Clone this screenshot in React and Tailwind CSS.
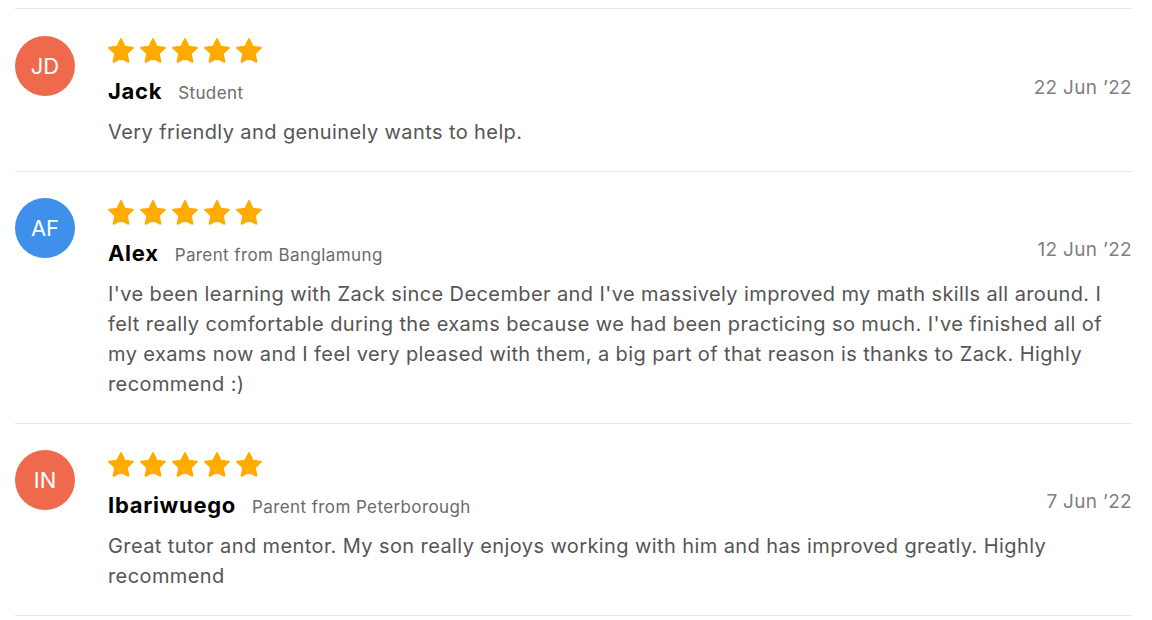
import React from 'react';

const reviews = [
  {
    initials: 'JD',
    color: 'bg-[#ef6a4c]',
    name: 'Jack',
    role: 'Student',
    date: '22 Jun \u201922',
    text: 'Very friendly and genuinely wants to help.',
  },
  {
    initials: 'AF',
    color: 'bg-[#3f90ea]',
    name: 'Alex',
    role: 'Parent from Banglamung',
    date: '12 Jun \u201922',
    text: "I've been learning with Zack since December and I've massively improved my math skills all around. I felt really comfortable during the exams because we had been practicing so much. I've finished all of my exams now and I feel very pleased with them, a big part of that reason is thanks to Zack. Highly recommend :)",
  },
  {
    initials: 'IN',
    color: 'bg-[#ef6a4c]',
    name: 'Ibariwuego',
    role: 'Parent from Peterborough',
    date: '7 Jun \u201922',
    text: 'Great tutor and mentor. My son really enjoys working with him and has improved greatly. Highly recommend',
  },
];

function Star() {
  return (
    <svg width="26" height="25" viewBox="1.6 1.4 20.8 19.8" className="shrink-0">
      <path
        d="M12 2.2l2.9 6.1 6.6.8-4.9 4.6 1.3 6.6L12 17.1l-5.9 3.2 1.3-6.6-4.9-4.6 6.6-.8z"
        fill="#ffab00"
        stroke="#ffab00"
        strokeWidth="1.6"
        strokeLinejoin="round"
      />
    </svg>
  );
}

function Review({ r }) {
  return (
    <div className="flex gap-[33px] border-b border-[#e6e6e6] pt-[26px] first:pt-[27px] pb-[24px]">
      <div className={`w-[60px] h-[60px] rounded-full ${r.color} shrink-0 flex items-center justify-center text-white text-[22px]`}>
        {r.initials}
      </div>
      <div className="flex-1 min-w-0">
        <div className="flex gap-[6px] mt-[2px]">
          {[0, 1, 2, 3, 4].map((i) => <Star key={i} />)}
        </div>
        <div className="flex items-center justify-between mt-[12px]">
          <div className="flex items-baseline gap-4">
            <span className="text-[22px] font-bold text-black tracking-[0.7px]">{r.name}</span>
            <span className="text-[17px] text-[#6b6b6b] tracking-[0.4px]">{r.role}</span>
          </div>
          <span className="text-[19px] text-[#808080] tracking-[0.3px] -mt-[6px]">{r.date}</span>
        </div>
        <p className="mt-[9px] text-[20px] leading-[30px] text-[#555] tracking-[0.4px]">{r.text}</p>
      </div>
    </div>
  );
}

export default function App() {
  return (
    <div className="bg-white min-h-screen px-[15px] pr-[20px] pt-2" style={{ fontFamily: 'Inter, "Liberation Sans", sans-serif' }}>
      <div className="border-t border-[#e6e6e6]">
        {reviews.map((r) => <Review key={r.name} r={r} />)}
      </div>
    </div>
  );
}
